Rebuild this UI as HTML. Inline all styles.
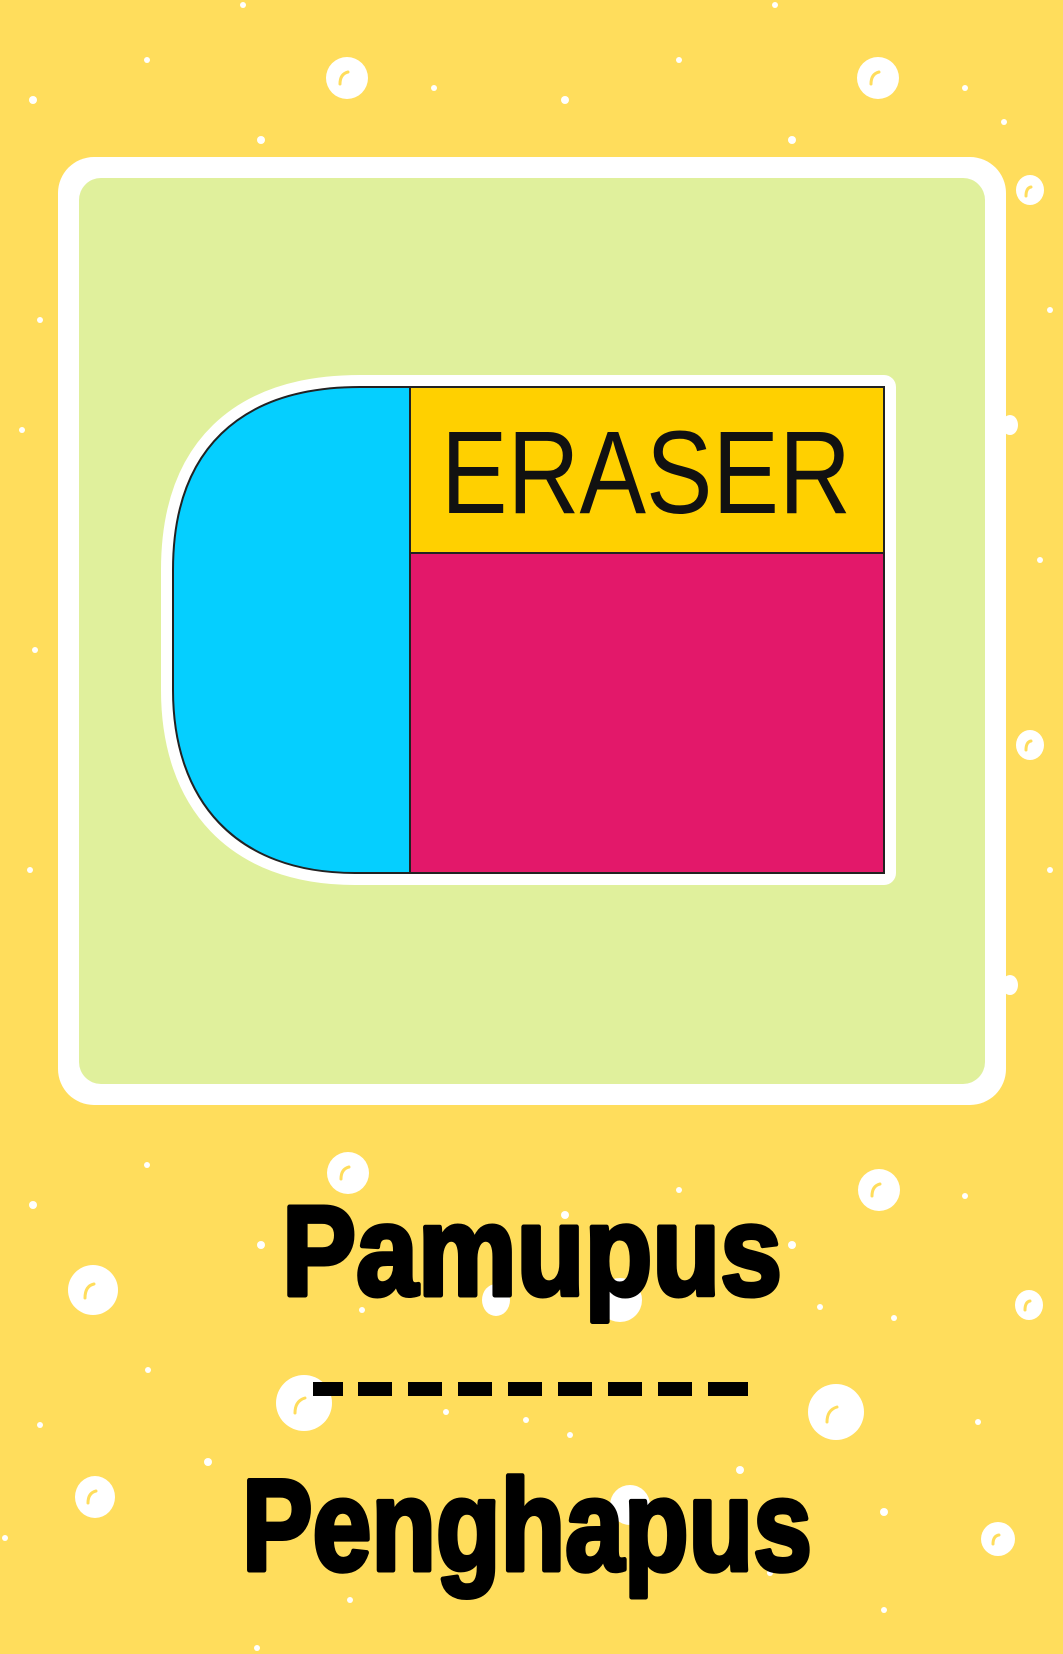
<!DOCTYPE html>
<html><head><meta charset="utf-8"><style>
html,body{margin:0;padding:0;width:1063px;height:1654px;overflow:hidden;background:#FFDD5C;}
svg{display:block}
</style></head><body>
<svg width="1063" height="1654" viewBox="0 0 1063 1654" xmlns="http://www.w3.org/2000/svg">
<rect width="1063" height="1654" fill="#FFDD5C"/>
<g fill="#fff">
<ellipse cx="347" cy="78" rx="21" ry="21"/><ellipse cx="878" cy="78" rx="21" ry="21"/>
<ellipse cx="1030" cy="190" rx="14" ry="15"/><ellipse cx="1030" cy="745" rx="14" ry="15"/>
<ellipse cx="1010" cy="425" rx="8" ry="10"/><ellipse cx="1010" cy="985" rx="8" ry="10"/>
<ellipse cx="348" cy="1173" rx="21" ry="21"/><ellipse cx="879" cy="1190" rx="21" ry="21"/>
<ellipse cx="93" cy="1290" rx="25" ry="25"/><ellipse cx="1029" cy="1305" rx="14" ry="15"/>
<ellipse cx="304" cy="1403" rx="28" ry="28"/><ellipse cx="836" cy="1412" rx="28" ry="28"/>
<ellipse cx="95" cy="1497" rx="20" ry="21"/><ellipse cx="998" cy="1539" rx="17" ry="17"/>
<ellipse cx="496" cy="1300" rx="14" ry="16"/><ellipse cx="620" cy="1300" rx="22" ry="22"/>
<ellipse cx="630" cy="1505" rx="20" ry="20"/>
<circle cx="33" cy="100" r="4"/><circle cx="147" cy="60" r="3"/><circle cx="261" cy="140" r="4"/><circle cx="434" cy="88" r="3"/>
<circle cx="565" cy="100" r="4"/><circle cx="679" cy="60" r="3"/><circle cx="792" cy="140" r="4"/><circle cx="965" cy="88" r="3"/>
<circle cx="1004" cy="122" r="3"/><circle cx="243" cy="5" r="3"/><circle cx="775" cy="5" r="3"/>
<circle cx="40" cy="320" r="3"/><circle cx="22" cy="430" r="3"/><circle cx="35" cy="650" r="3"/><circle cx="30" cy="870" r="3"/>
<circle cx="1050" cy="310" r="3"/><circle cx="1040" cy="560" r="3"/><circle cx="1050" cy="870" r="3"/>
<circle cx="33" cy="1205" r="4"/><circle cx="147" cy="1165" r="3"/><circle cx="261" cy="1245" r="4"/><circle cx="362" cy="1310" r="3"/>
<circle cx="565" cy="1215" r="4"/><circle cx="679" cy="1190" r="3"/><circle cx="792" cy="1245" r="4"/><circle cx="965" cy="1196" r="3"/>
<circle cx="820" cy="1307" r="3"/><circle cx="894" cy="1318" r="3"/><circle cx="148" cy="1370" r="3"/><circle cx="40" cy="1425" r="3"/>
<circle cx="446" cy="1412" r="3"/><circle cx="526" cy="1420" r="3"/><circle cx="570" cy="1435" r="3"/><circle cx="978" cy="1422" r="3"/>
<circle cx="208" cy="1462" r="4"/><circle cx="740" cy="1470" r="4"/><circle cx="884" cy="1512" r="4"/><circle cx="5" cy="1538" r="3"/>
<circle cx="770" cy="1573" r="3"/><circle cx="350" cy="1600" r="3"/><circle cx="884" cy="1610" r="3"/><circle cx="257" cy="1648" r="3"/>
</g>
<g fill="none" stroke="#FFDD5C" stroke-width="3" stroke-linecap="round">
<path d="M340 84 q0 -10 8 -12"/><path d="M871 84 q0 -10 8 -12"/><path d="M1026 196 q0 -8 5 -9"/><path d="M1026 750 q0 -8 5 -9"/>
<path d="M341 1179 q0 -10 8 -12"/><path d="M872 1196 q0 -10 8 -12"/><path d="M85 1298 q0 -12 9 -14"/><path d="M1025 1310 q0 -8 5 -9"/>
<path d="M295 1413 q0 -12 10 -15"/><path d="M827 1422 q0 -12 10 -15"/><path d="M88 1503 q0 -10 8 -12"/><path d="M993 1544 q0 -8 6 -9"/>
</g>
<rect x="58" y="157" width="948" height="948" rx="36" fill="#fff"/>
<rect x="79" y="178" width="906" height="906" rx="22" fill="#E0F09C"/>
<g fill="#fff" stroke="#fff" stroke-width="24" stroke-linejoin="round">
<path d="M410 387 V873 H355 C235 873 173 800 173 690 V570 C173 450 240 387 360 387Z"/>
<rect x="410" y="387" width="474" height="486"/>
</g>
<path d="M410 387 H884 V873 H410Z" fill="#E3186A" stroke="#222" stroke-width="2"/>
<rect x="410" y="387" width="474" height="166" fill="#FFD000" stroke="#222" stroke-width="2"/>
<path d="M410 387 V873 H355 C235 873 173 800 173 690 V570 C173 450 240 387 360 387Z" fill="#05CFFF" stroke="#222" stroke-width="2"/>
<text x="646" y="513" text-anchor="middle" font-family="Liberation Sans, sans-serif" font-size="118" fill="#111" textLength="410" lengthAdjust="spacingAndGlyphs">ERASER</text>
<text x="532" y="1295" text-anchor="middle" font-family="Liberation Sans, sans-serif" font-weight="bold" font-size="128" fill="#000" stroke="#000" stroke-width="5" stroke-linejoin="round" textLength="500" lengthAdjust="spacingAndGlyphs">Pamupus</text>
<g fill="#000">
<rect x="313" y="1382" width="30" height="14"/><rect x="358" y="1382" width="34" height="14"/><rect x="408" y="1382" width="34" height="14"/>
<rect x="458" y="1382" width="34" height="14"/><rect x="508" y="1382" width="34" height="14"/><rect x="558" y="1382" width="34" height="14"/>
<rect x="608" y="1382" width="34" height="14"/><rect x="658" y="1382" width="34" height="14"/><rect x="708" y="1382" width="40" height="14"/>
</g>
<text x="527" y="1570" text-anchor="middle" font-family="Liberation Sans, sans-serif" font-weight="bold" font-size="130" fill="#000" stroke="#000" stroke-width="5" stroke-linejoin="round" textLength="570" lengthAdjust="spacingAndGlyphs">Penghapus</text>
</svg>
</body></html>
